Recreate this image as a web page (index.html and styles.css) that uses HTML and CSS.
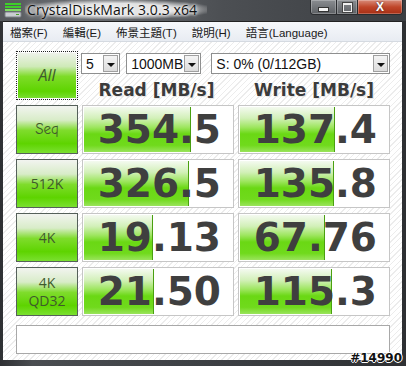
FILE: index.html
```html
<!DOCTYPE html>
<html lang="zh-TW">
<head>
  <meta charset="UTF-8">
  <title>CrystalDiskMark 3.0.3 x64</title>
  <link rel="stylesheet" href="styles.css">
</head>
<body>
  <div class="window">
    <!-- 標題列 -->
    <div class="titlebar">
      <svg class="app-icon" viewBox="0 0 18 16" width="18" height="16">
        <rect x="1" y="1" width="16" height="2" fill="#3fcf2a"/>
        <rect x="1" y="4" width="16" height="2" fill="#3fcf2a"/>
        <rect x="1" y="7" width="16" height="2" fill="#7ddc5e"/>
        <rect x="1" y="10" width="16" height="5" rx="1" fill="#c9cdd1" stroke="#7d8287"/>
        <rect x="12" y="12" width="3" height="1" fill="#4a9e2a"/>
      </svg>
      <span class="title">CrystalDiskMark 3.0.3 x64</span>
      <div class="caption-btns">
        <span class="cap-btn cap-min"><i></i></span>
        <span class="cap-btn cap-max"><i></i></span>
        <span class="cap-btn cap-close">X</span>
      </div>
    </div>

    <div class="frame">
      <!-- 選單 -->
      <div class="menubar">
        <span>檔案(F)</span>
        <span>編輯(E)</span>
        <span>佈景主題(T)</span>
        <span>說明(H)</span>
        <span>語言(Language)</span>
      </div>

      <div class="client">
        <div class="board">
          <button class="test-btn all-btn"><span>All</span></button>

          <div class="top-right">
            <div class="combos">
              <div class="combo combo-count"><span>5</span><b class="arrow"></b></div>
              <div class="combo combo-size"><span>1000MB</span><b class="arrow"></b></div>
              <div class="combo combo-drive"><span>S: 0% (0/112GB)</span><b class="arrow"></b></div>
            </div>
            <div class="headers">
              <div>Read [MB/s]</div>
              <div>Write [MB/s]</div>
            </div>
          </div>

          <button class="test-btn seq-btn">Seq</button>
          <div class="result"><div class="fill" style="width: 106px"></div><span class="num">354.5</span></div>
          <div class="result"><div class="fill" style="width: 94px"></div><span class="num">137.4</span></div>

          <button class="test-btn">512K</button>
          <div class="result"><div class="fill" style="width: 104px"></div><span class="num">326.5</span></div>
          <div class="result"><div class="fill" style="width: 93px"></div><span class="num">135.8</span></div>

          <button class="test-btn">4K</button>
          <div class="result"><div class="fill" style="width: 68px"></div><span class="num">19.13</span></div>
          <div class="result"><div class="fill" style="width: 84px"></div><span class="num">67.76</span></div>

          <button class="test-btn two-line">4K<br>QD32</button>
          <div class="result"><div class="fill" style="width: 69px"></div><span class="num">21.50</span></div>
          <div class="result"><div class="fill" style="width: 91px"></div><span class="num">115.3</span></div>
        </div>

        <div class="comment"></div>
      </div>
    </div>

    <span class="watermark">#14990</span>
  </div>
</body>
</html>
```

FILE: styles.css
```css
body {
  margin: 0;
  width: 406px;
  height: 366px;
  overflow: hidden;
  background: #35383c;
  font-family: "Liberation Sans", Arial, "Noto Sans CJK TC", sans-serif;
}
.window {
  position: relative;
  height: 366px;
  display: flex;
  flex-direction: column;
  background: linear-gradient(90deg, #2e3033, #4a4d51 8%, #3a3d41 60%, #2e3033);
}

/* 標題列 */
.titlebar {
  height: 21px;
  display: flex;
  align-items: flex-start;
  background: linear-gradient(90deg, #55585c 0%, #6b6e72 20%, #4c4f53 55%, #3b3e42 100%);
}
.app-icon {
  margin: 2px 3px 0 4px;
}
.title {
  font-family: "Open Sans", "Liberation Sans", sans-serif;
  font-size: 14px;
  line-height: 19px;
  letter-spacing: 0.1px;
  color: #111;
  padding: 0 10px 0 2px;
  background: radial-gradient(ellipse at center, rgba(240, 240, 240, 0.9) 45%, rgba(240, 240, 240, 0) 78%);
  text-shadow: 0 0 3px #fff, 0 0 6px #fff;
}
.caption-btns {
  margin-left: auto;
  margin-right: 3px;
  display: flex;
  height: 14px;
  border: 1px solid #2a2c2f;
  border-top: none;
  border-radius: 0 0 4px 4px;
  overflow: hidden;
}
.cap-btn {
  display: flex;
  align-items: center;
  justify-content: center;
  height: 14px;
  background: linear-gradient(#8a8d91, #5d6064);
  border-right: 1px solid #2a2c2f;
  box-shadow: inset 0 0 0 1px rgba(255, 255, 255, 0.25);
}
.cap-min {
  width: 25px;
}
.cap-min i {
  display: block;
  width: 9px;
  height: 3px;
  margin-top: 5px;
  background: #f4f4f4;
  border: 1px solid #333;
}
.cap-max {
  width: 20px;
}
.cap-max i {
  display: block;
  width: 7px;
  height: 6px;
  border: 1px solid #f0f0f0;
  border-top-width: 2px;
  outline: 1px solid #444;
}
.cap-close {
  width: 44px;
  border-right: none;
  background: linear-gradient(#d88c7a, #c0462a 50%, #a82e14);
  color: #fff;
  font-weight: bold;
  font-size: 12px;
  text-shadow: 0 0 2px #333;
}

/* 窗框與選單 */
.frame {
  flex: 1;
  display: flex;
  flex-direction: column;
  margin: 0 4px 6px 3px;
  border-top: 1px solid #222;
}
.menubar {
  height: 19px;
  display: flex;
  align-items: center;
  gap: 15px;
  padding-left: 7px;
  background: linear-gradient(#f6f8fb, #e8ecf2);
  border-bottom: 1px solid #d5dae1;
  font-size: 11.5px;
  color: #1a1a1a;
}

/* 主畫面 */
.client {
  flex: 1;
  padding: 9px 12px 0 13px;
  background: repeating-linear-gradient(135deg, #ffffff 0 3px, #ececec 3px 4px);
}
.board {
  display: grid;
  grid-template-columns: 62px 152px 152px;
  grid-template-rows: repeat(5, 49px);
  column-gap: 4px;
  row-gap: 5px;
}
.test-btn {
  margin: 0;
  padding: 0;
  border: 1px solid #55605a;
  background: linear-gradient(#f2f4f0 0%, #d8ecc8 30%, #7fdc2c 52%, #5ed400 80%, #7ae030 100%);
  font-family: "Open Sans", "Liberation Sans", sans-serif;
  font-size: 14px;
  line-height: 19px;
  color: #3f5a2c;
}
.all-btn {
  border: 1px dotted #222;
  padding: 1px;
  background: none;
}
.all-btn span {
  display: flex;
  height: 100%;
  align-items: center;
  justify-content: center;
  background: linear-gradient(#eef2ea 0%, #cfeab8 30%, #7edc28 52%, #5ed400 85%, #78de30 100%);
  font-style: italic;
  font-size: 16px;
}
.seq-btn {
  font-family: "Comic Neue", "DejaVu Sans", sans-serif;
  font-size: 15px;
}
.top-right {
  grid-column: 2 / 4;
  display: flex;
  flex-direction: column;
}
.combos {
  display: flex;
  margin: 2px 0 0 -1px;
  height: 21px;
}
.combo {
  display: flex;
  align-items: center;
  background: #fff;
  border: 1px solid #8e8f8f;
  padding: 1px;
  font-size: 14px;
  color: #111;
}
.combo span {
  flex: 1;
  padding-left: 3px;
  white-space: nowrap;
}
.combo-count {
  width: 36px;
}
.combo-size {
  width: 73px;
  margin-left: 6px;
}
.combo-drive {
  width: 179px;
  margin-left: 10px;
}
.arrow {
  width: 15px;
  height: 17px;
  box-sizing: border-box;
  border: 1px solid #a0a0a0;
  background: linear-gradient(#f4f4f4, #dcdcdc);
  position: relative;
}
.arrow::after {
  content: "";
  position: absolute;
  left: 3px;
  top: 7px;
  border: 4px solid transparent;
  border-top: 4px solid #111;
  border-bottom: none;
}
.headers {
  flex: 1;
  display: grid;
  grid-template-columns: 152px 152px;
  column-gap: 4px;
  align-items: end;
  font-family: "DejaVu Sans", Verdana, sans-serif;
  font-weight: bold;
  font-size: 17px;
  line-height: 20px;
  color: #3b3b3b;
  text-align: center;
  text-shadow: 0 0 2px #fff, 1px 1px 1px #dcdcdc;
}
.headers div:first-child {
  padding-right: 3px;
}
.result {
  display: grid;
  background: #fff;
  border: 1px solid #c6c6c6;
  padding: 1px;
}
.fill,
.num {
  grid-area: 1 / 1;
}
.fill {
  background: linear-gradient(#f4faf0 0%, #d2f0b8 25%, #9ee660 45%, #6ad814 60%, #70da1c 85%, #9ae45c 100%);
  border-right: 1px solid #4aa010;
}
.num {
  justify-self: end;
  align-self: center;
  padding-right: 11px;
  font-family: "DejaVu Sans", Verdana, sans-serif;
  font-weight: bold;
  font-size: 39px;
  line-height: 44px;
  color: #3f3f3f;
}
.two-line {
  line-height: 18px;
  font-size: 14px;
}
.comment {
  margin-top: 9px;
  height: 27px;
  background: #fff;
  border: 1px solid #a8a8a8;
}

/* 浮水印 */
.watermark {
  position: absolute;
  right: 4px;
  bottom: 1px;
  font-family: "DejaVu Sans", sans-serif;
  font-weight: bold;
  font-size: 12px;
  color: #111;
  text-shadow: -1px 0 #fff, 1px 0 #fff, 0 -1px #fff, 0 1px #fff;
}
```
